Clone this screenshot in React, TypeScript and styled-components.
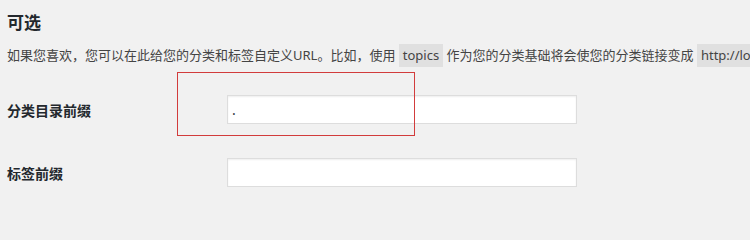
import React from 'react'
import styled, { createGlobalStyle } from 'styled-components'

const GlobalStyle = createGlobalStyle`
	html, body {
		margin: 0;
		padding: 0;
		background: #f1f1f1;
		overflow: hidden;
	}
	body {
		font-family: "Noto Sans", "Noto Sans CJK SC", sans-serif;
		color: #444;
	}
`

const Page = styled.div`
	position: relative;
	display: flow-root;
	padding: 0 0 0 7px;
	width: 1200px;
`

const Heading = styled.h2`
	margin: 12px 0 0;
	font-size: 17px;
	line-height: 22px;
	font-weight: 700;
	color: #23282d;
`

const Description = styled.p`
	margin: 11px 0 0;
	font-size: 13px;
	line-height: 20px;
	white-space: nowrap;
	color: #444;
`

const Code = styled.code`
	font-family: "Noto Sans", "Noto Sans CJK SC", sans-serif;
	font-size: 13px;
	padding: 2px 4px 3px;
	background: rgba(0, 0, 0, 0.07);
`

const FormTable = styled.div`
	margin-top: 13px;
	display: grid;
	grid-template-columns: 220px 350px;
`

const Row = styled.div`
	display: contents;
`

const Label = styled.label`
	display: flex;
	align-items: center;
	padding: 17px 0;
	font-size: 14px;
	font-weight: 700;
	color: #23282d;
`

const Cell = styled.div`
	padding: 17px 0;
`

const TextInput = styled.input`
	box-sizing: border-box;
	display: block;
	width: 100%;
	height: 29px;
	margin: 0;
	padding: 0 4px;
	border: 1px solid #ddd;
	box-shadow: inset 0 1px 2px rgba(0, 0, 0, 0.07);
	background: #fff;
	font-family: "Noto Sans", "Noto Sans CJK SC", sans-serif;
	font-size: 14px;
	color: #32373c;
	outline: none;
`

const Highlight = styled.div`
	position: absolute;
	left: 177px;
	top: 72px;
	width: 238px;
	height: 64px;
	box-sizing: border-box;
	border: 1px solid #d23c3c;
	pointer-events: none;
`

const fields = [
	{ id: 'category_base', label: '分类目录前缀', value: '.' },
	{ id: 'tag_base', label: '标签前缀', value: '' },
]

const App: React.FC = () => {
	return (
		<Page>
			<GlobalStyle />
			<Heading>可选</Heading>
			<Description>
				如果您喜欢，您可以在此给您的分类和标签自定义URL。比如，使用 <Code>topics</Code> 作为您的分类基础将会使您的分类链接变成 <Code>http://localhost/topics/uncategorized/</Code>。如果您不设置，将使用默认值。
			</Description>
			<FormTable>
				{fields.map(field => (
					<Row key={field.id}>
						<Label htmlFor={field.id}>{field.label}</Label>
						<Cell>
							<TextInput id={field.id} type="text" defaultValue={field.value} />
						</Cell>
					</Row>
				))}
			</FormTable>
			<Highlight />
		</Page>
	)
}

export default App
